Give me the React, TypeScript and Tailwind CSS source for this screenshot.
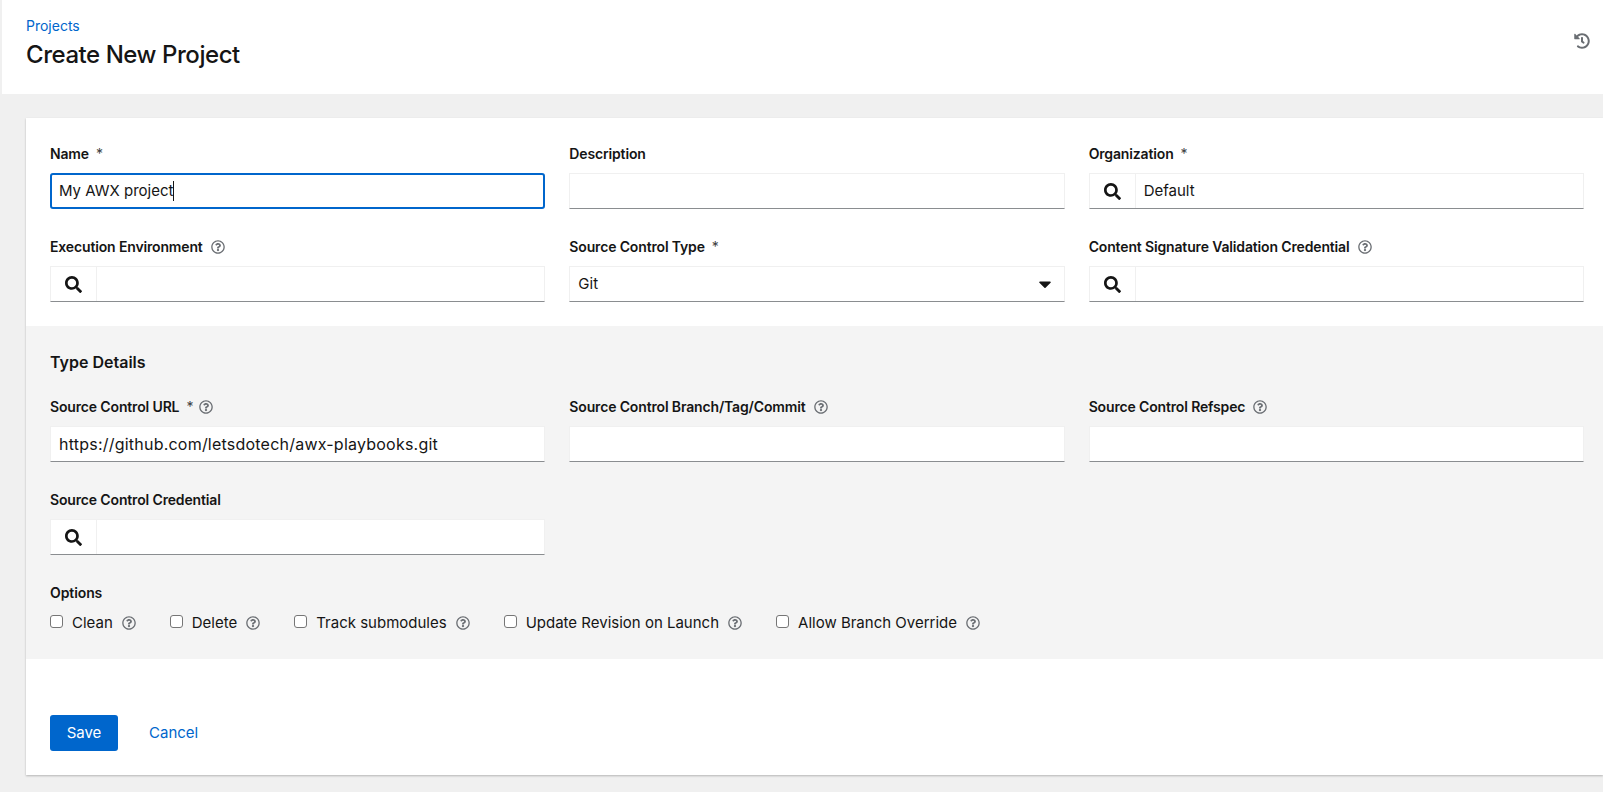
import { FaSearch, FaHistory, FaRegQuestionCircle, FaCaretDown } from "react-icons/fa";

function Help() {
  return <FaRegQuestionCircle className="w-[14px] h-[14px] text-[#6a6e73] shrink-0" />;
}

function Label({ text, required, help }: { text: string; required?: boolean; help?: boolean }) {
  return (
    <div className="flex items-center h-[21px] mb-[9px] text-sm font-semibold tracking-[-0.15px] text-[#151515]">
      <span>{text}</span>
      {required && <span className="ml-[7px] font-normal text-[#3c3f42]">*</span>}
      {help && <span className={required ? "ml-[6px]" : "ml-2"}><Help /></span>}
    </div>
  );
}

function TextInput({ value }: { value?: string }) {
  return (
    <div className="h-9 flex items-center px-2 bg-white border border-[#f0f0f0] border-b-[#8a8d90] text-base tracking-[0.22px] text-[#151515]">
      {value}
    </div>
  );
}

function Lookup({ value }: { value?: string }) {
  return (
    <div className="h-9 flex bg-white border border-[#f0f0f0] border-b-[#8a8d90] text-[15px] text-[#151515]">
      <div className="w-[46px] flex items-center justify-center border-r border-[#f0f0f0]">
        <FaSearch className="w-[17px] h-[17px] text-[#151515]" />
      </div>
      <div className="flex-1 flex items-center px-2">{value}</div>
    </div>
  );
}

function Check({ text, className }: { text: string; className: string }) {
  return (
    <label className={`flex items-center text-[15px] text-[#151515] ${className}`}>
      <span className="w-[13px] h-[13px] rounded-[3px] border border-[#767676] bg-white mr-[9px] -mt-[3px]" />
      <span>{text}</span>
      <span className="ml-[9px]"><Help /></span>
    </label>
  );
}

export default function App() {
  return (
    <div className="h-[792px] overflow-hidden bg-[#f0f0f0] pl-[2px] font-['Inter','Liberation_Sans',sans-serif]">
      <div className="h-[94px] bg-white pl-[24px] pr-[13px] flex justify-between">
        <div className="pt-[17px]">
          <a className="block text-sm leading-[18px] text-[#0066cc]">Projects</a>
          <h1 className="mt-[5px] text-2xl leading-[30px] font-medium tracking-[-0.45px] text-[#151515]">Create New Project</h1>
        </div>
        <FaHistory className="mt-[33px] w-4 h-4 text-[#6a6e73]" />
      </div>

      <div className="mt-6 ml-6 h-[657px] bg-white shadow-[0_1px_2px_rgba(0,0,0,0.25)]">
        <div className="pt-[25px] pl-6 pr-[19px] pb-6 grid grid-cols-3 gap-x-6 gap-y-[27px]">
          <div>
            <Label text="Name" required />
            <div className="h-9 flex items-center px-[7px] bg-white border-2 border-[#0066cc] rounded-[3px] text-[15px] text-[#151515]">
              My AWX project<span className="w-px h-5 bg-[#151515]" />
            </div>
          </div>
          <div>
            <Label text="Description" />
            <TextInput />
          </div>
          <div>
            <Label text="Organization" required />
            <Lookup value="Default" />
          </div>
          <div>
            <Label text="Execution Environment" help />
            <Lookup />
          </div>
          <div>
            <Label text="Source Control Type" required />
            <div className="h-9 flex items-center justify-between pl-2 pr-[9px] bg-white border border-[#f0f0f0] border-b-[#8a8d90] text-[15px] text-[#151515]">
              Git
              <FaCaretDown className="w-5 h-5 text-[#151515]" />
            </div>
          </div>
          <div>
            <Label text="Content Signature Validation Credential" help />
            <Lookup />
          </div>
        </div>

        <div className="h-[333px] bg-[#f4f4f4] pl-6 pr-[19px] pt-[25px]">
          <h2 className="h-[21px] flex items-center text-base font-semibold text-[#151515]">Type Details</h2>
          <div className="mt-6 grid grid-cols-3 gap-x-6 gap-y-[27px]">
            <div>
              <Label text="Source Control URL" required help />
              <TextInput value="https://github.com/letsdotech/awx-playbooks.git" />
            </div>
            <div>
              <Label text="Source Control Branch/Tag/Commit" help />
              <TextInput />
            </div>
            <div>
              <Label text="Source Control Refspec" help />
              <TextInput />
            </div>
            <div>
              <Label text="Source Control Credential" />
              <Lookup />
            </div>
          </div>
          <div className="mt-[27px] h-[21px] flex items-center text-sm font-semibold tracking-[-0.1px] text-[#151515]">Options</div>
          <div className="mt-[9px] flex items-center h-[22px]">
            <Check text="Clean" className="mr-[34px]" />
            <Check text="Delete" className="mr-[34px]" />
            <Check text="Track submodules" className="mr-[34px]" />
            <Check text="Update Revision on Launch" className="mr-[34px]" />
            <Check text="Allow Branch Override" className="" />
          </div>
        </div>

        <div className="pt-14 pl-6 flex items-center">
          <button className="w-[68px] h-9 bg-[#0066cc] rounded-[3px] text-white text-[15px]">Save</button>
          <a className="ml-[31px] text-[15px] text-[#0066cc]">Cancel</a>
        </div>
      </div>
    </div>
  );
}
